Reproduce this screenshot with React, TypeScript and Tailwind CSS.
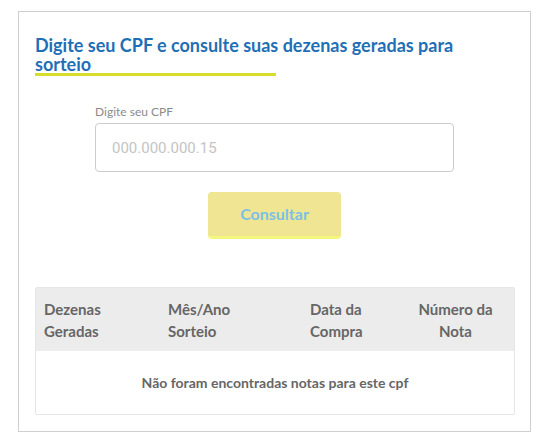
export default function App() {
  const font = { fontFamily: "Lato, 'Open Sans', sans-serif" };
  return (
    <div className="w-[548px] h-[444px] bg-white pt-[11px] pl-[18px]" style={font}>
      <div className="w-[513px] h-[421px] border border-[#cfcfcf] px-[16px] pt-[24px]">
        <h1 className="text-[18px] leading-[19px] font-bold text-[#1f6fb6] w-[450px]">
          Digite seu CPF e consulte suas dezenas geradas para sorteio
        </h1>
        <div className="w-[241px] h-[3px] bg-[#d6dd2b] -mt-[1px]" />
        <div className="ml-[60px] mt-[29px] w-[359px]">
          <div className="text-[12px] leading-[14px] text-[#8a8a8a]">Digite seu CPF</div>
          <input
            className="mt-[4px] w-[359px] h-[49px] border border-[#cccccc] rounded-[4px] px-[16px] text-[15px] outline-none placeholder:text-[#c4c4c4]"
            placeholder="000.000.000.15"
            style={{ fontFamily: "Roboto, sans-serif" }}
          />
        </div>
        <div className="flex justify-center mt-[20px]">
          <button
            className="w-[133px] h-[47px] rounded-[4px] bg-[#efe592] border-b-[3px] border-[#f6f57e] text-[16px] font-bold text-[#7cc1e6]"
            style={font}
          >
            Consultar
          </button>
        </div>
        <div className="mt-[48px] w-[480px] border border-[#e6e6e6] rounded-[2px]">
          <div className="grid grid-cols-[132px_142px_103px_103px] bg-[#ececec] h-[63px] items-center text-[15px] leading-[22px] font-bold text-[#666666]">
            <div className="pl-[8px]">Dezenas<br />Geradas</div>
            <div>Mês/Ano<br />Sorteio</div>
            <div>Data da<br />Compra</div>
            <div className="text-center pr-[18px]">Número da<br />Nota</div>
          </div>
          <div className="h-[63px] flex items-center justify-center text-[14px] font-bold text-[#666666]">
            Não foram encontradas notas para este cpf
          </div>
        </div>
      </div>
    </div>
  );
}
